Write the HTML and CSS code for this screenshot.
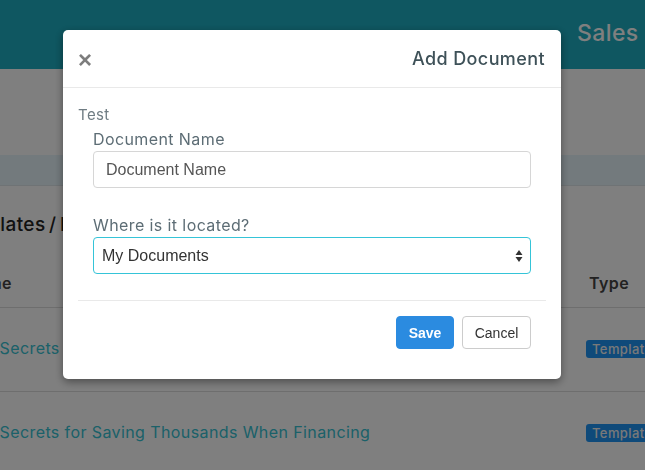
FILE: index.html
```html
<!DOCTYPE html>
<html lang="en">
<head>
    <meta charset="UTF-8">
    <title>Sales Templates</title>
    <link rel="stylesheet" href="styles.css">
</head>
<body>
    <div class="topbar">Sales Templates</div>

    <div class="page">
        <div class="crumbs"></div>
        <h2 class="page-title">Templates / Documents</h2>

        <table class="doc-table">
            <thead>
                <tr>
                    <th>Name</th>
                    <th class="col-type">Type</th>
                </tr>
            </thead>
            <tbody>
                <tr>
                    <td><a href="#">Top Secrets for Selling Your Home</a></td>
                    <td class="col-type"><span class="badge">Template</span></td>
                </tr>
                <tr>
                    <td><a href="#">Top Secrets for Saving Thousands When Financing</a></td>
                    <td class="col-type"><span class="badge">Template</span></td>
                </tr>
            </tbody>
        </table>
    </div>

    <div class="backdrop">
        <div class="modal">
            <div class="modal-header">
                <button class="close" type="button">&times;</button>
                <h4 class="modal-title">Add Document</h4>
            </div>
            <div class="modal-body">
                <div class="note">Test</div>
                <div class="form-group">
                    <label for="docName">Document Name</label>
                    <input type="text" id="docName" placeholder="Document Name">
                </div>
                <div class="form-group">
                    <label for="docLocation">Where is it located?</label>
                    <div class="select-wrap">
                        <select id="docLocation">
                            <option>My Documents</option>
                            <option>Shared Documents</option>
                        </select>
                        <svg class="select-arrows" width="8" height="14" viewBox="0 0 8 14">
                            <path d="M4 1 L7.5 6 L0.5 6 Z M4 13 L7.5 8 L0.5 8 Z" fill="#333"/>
                        </svg>
                    </div>
                </div>
            </div>
            <div class="modal-footer">
                <button class="btn btn-primary" type="button">Save</button>
                <button class="btn btn-default" type="button">Cancel</button>
            </div>
        </div>
    </div>
</body>
</html>
```

FILE: styles.css
```css
:root {
    --teal: #1eaec2;
    --text-color: #333;
    --label-color: #5d6d75;
}
html, body {
    margin: 0;
    height: 100%;
    overflow: hidden;
}
body {
    font-family: Inter, "Noto Sans", sans-serif;
    letter-spacing: 0.4px;
    background-color: #fff;
    color: var(--text-color);
}
.topbar {
    height: 69px;
    background-color: var(--teal);
    color: #fff;
    font-size: 23px;
    font-weight: 500;
    line-height: 66px;
    padding-left: 577px;
    word-spacing: 20px;
    white-space: nowrap;
    overflow: hidden;
}
.page {
    margin-left: -52px;
}
.crumbs {
    height: 30px;
    margin-top: 86px;
    background-color: #e6f4fa;
    border-bottom: 1px solid #dfe6ea;
}
.page-title {
    margin: 27px 0 0;
    font-size: 19px;
    font-weight: 500;
    color: #222;
    line-height: 24px;
    word-spacing: -2px;
}
.doc-table {
    width: 774px;
    table-layout: fixed;
    border-collapse: collapse;
    margin: 22px 0 0 17px;
}
.doc-table th {
    text-align: left;
    font-size: 16px;
    font-weight: 600;
    color: #444;
    height: 48px;
    padding: 0;
    border-bottom: 1px solid #ddd;
}
.doc-table td {
    height: 79px;
    padding: 0 0 4px;
    border-bottom: 1px solid #ddd;
    font-size: 16px;
    white-space: nowrap;
}
.doc-table .col-type {
    width: 150px;
}
.doc-table th.col-type {
    padding-left: 3px;
}
.doc-table a {
    color: #36c2d2;
    text-decoration: none;
}
.badge {
    display: inline-block;
    background-color: #1e94f4;
    color: #f2f2f2;
    font-size: 13px;
    font-weight: 500;
    padding: 1px 6px;
    border-radius: 3px;
    line-height: 16px;
}

/* modal */
.backdrop {
    position: fixed;
    inset: 0;
    background-color: rgba(0, 0, 0, 0.5);
}
.modal {
    width: 498px;
    margin: 30px 0 0 63px;
    background-color: #fff;
    border-radius: 5px;
    box-shadow: 0 3px 9px rgba(0, 0, 0, 0.4);
}
.modal-header {
    display: flex;
    align-items: center;
    justify-content: space-between;
    height: 58px;
    padding: 0 16px 0 15px;
    border-bottom: 1px solid #e9e9e9;
    box-sizing: border-box;
}
.close {
    border: none;
    background: none;
    padding: 0;
    font-family: "Liberation Sans", sans-serif;
    font-size: 24px;
    font-weight: 700;
    color: #7d7d7d;
    line-height: 1;
    margin-top: 3px;
}
.modal-title {
    margin: 0;
    font-size: 18px;
    font-weight: 500;
    color: #3e5158;
}
.modal-body {
    padding: 16px 15px 0;
}
.note {
    font-size: 15px;
    color: #6f7c83;
    line-height: 22px;
}
.form-group {
    margin: 2px 15px 26px;
}
.form-group label {
    display: block;
    font-size: 16px;
    color: var(--label-color);
    line-height: 22px;
    margin-bottom: 1px;
}
.form-group input,
.form-group select {
    display: block;
    width: 100%;
    height: 37px;
    box-sizing: border-box;
    font-family: "Liberation Sans", Arial, sans-serif;
    font-size: 16px;
    letter-spacing: 0;
    border-radius: 4px;
    background-color: #fff;
}
.form-group input {
    border: 1px solid #d6d6d6;
    padding: 0 12px;
}
.form-group input::placeholder {
    color: #555;
}
.select-wrap {
    position: relative;
}
.form-group select {
    appearance: none;
    border: 1px solid #35c4d8;
    padding: 0 8px;
    color: #333;
}
.select-arrows {
    position: absolute;
    right: 8px;
    top: 12px;
}
.modal-footer {
    display: flex;
    justify-content: flex-end;
    gap: 8px;
    margin: 0 15px;
    padding: 15px 15px 30px;
    border-top: 1px solid #e9e9e9;
}
.btn {
    height: 33px;
    border-radius: 4px;
    font-family: "Liberation Sans", Arial, sans-serif;
    font-size: 14px;
    letter-spacing: 0;
    padding: 0 10px;
    cursor: pointer;
}
.btn-primary {
    background-color: #2b8be0;
    border: 1px solid #2b8be0;
    color: #fff;
    font-weight: 700;
    width: 58px;
}
.btn-default {
    background-color: #fff;
    border: 1px solid #ccc;
    color: #333;
    width: 69px;
}
```
